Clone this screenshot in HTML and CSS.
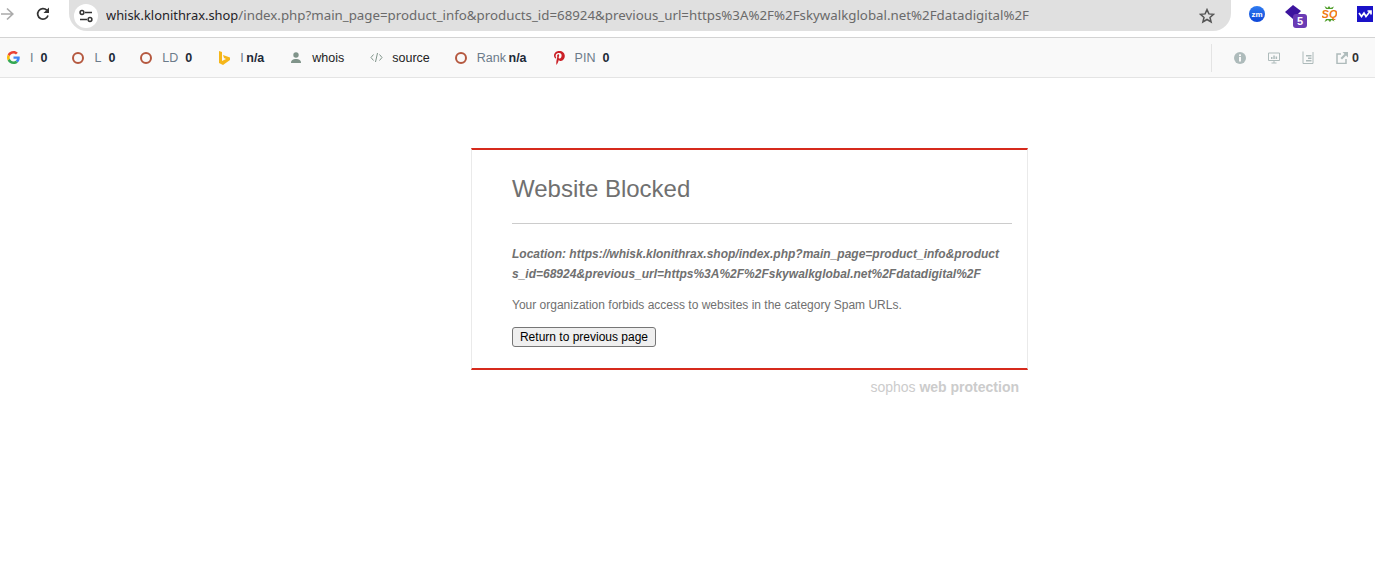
FILE: index.html
```html
<!DOCTYPE html>
<html lang="en">
<head>
  <meta charset="UTF-8">
  <title>Website Blocked</title>
  <link rel="stylesheet" href="styles.css">
</head>
<body>
  <!-- browser toolbar -->
  <div class="toolbar">
    <svg class="nav-forward" width="13" height="14" viewBox="0 0 13 14"><path d="M0 7H11.500M6 1.500L11.800 7 6 12.500" fill="none" stroke="#ababab" stroke-width="1.700"/></svg>
    <svg class="nav-reload" width="14" height="14" viewBox="0 0 14 14"><path d="M12 8.500A5.300 5.300 0 1 1 10.800 3.200" fill="none" stroke="#333" stroke-width="1.700"/><path d="M13 .5V6H7.500z" fill="#333"/></svg>
    <div class="omnibox">
      <span class="site-chip">
        <svg width="14" height="14" viewBox="0 0 14 14"><path d="M6 3.500H13M1 10.500H8" stroke="#333" stroke-width="1.500" fill="none"/><circle cx="3" cy="3.500" r="1.900" fill="none" stroke="#333" stroke-width="1.500"/><circle cx="11" cy="10.500" r="1.900" fill="none" stroke="#333" stroke-width="1.500"/></svg>
      </span>
      <span class="url"><span class="host">whisk.klonithrax.shop</span>/index.php?main_page=product_info&amp;products_id=68924&amp;previous_url=https%3A%2F%2Fskywalkglobal.net%2Fdatadigital%2F</span>
      <svg class="star" width="16" height="16" viewBox="0 0 16 16"><path d="M8 1.600l1.900 4.300 4.600.4-3.500 3.100 1.100 4.600L8 11.500 3.900 14l1.100-4.600L1.500 6.300l4.600-.4z" fill="none" stroke="#555" stroke-width="1.500"/></svg>
    </div>
    <div class="extensions">
      <svg width="16" height="16" viewBox="0 0 16 16"><defs><linearGradient id="zmfill" x1="0" y1="0" x2="0" y2="1"><stop offset="0" stop-color="#2f7cf0"/><stop offset="1" stop-color="#0d46d8"/></linearGradient></defs><circle cx="8" cy="8" r="8" fill="url(#zmfill)"/><text x="8" y="10.500" class="zm-text" text-anchor="middle">zm</text></svg>
      <span class="ext-stack">
        <svg width="16" height="14" viewBox="0 0 16 14"><path d="M8 0L16 6 8 14 0 7z" fill="#3c149e"/></svg>
        <span class="ext-badge">5</span>
      </span>
      <svg class="ext-sq" width="15" height="16" viewBox="0 0 15 16"><path d="M4 3L2.500 0 5.500 2 7 0 8.500 2 12 .5 10.500 3zM4 13L2.500 16 6 14 8 16 9.500 14 12.500 15.500 11 13z" fill="#4f9e2a"/><text x="7.500" y="12" class="sq-text" text-anchor="middle">SQ</text></svg>
      <svg width="16" height="16" viewBox="0 0 16 16"><rect width="16" height="16" fill="#1a12c8"/><path d="M2 7l2.500 3.500L7 7l2 3.500 4-5M10.500 5H14V8.500" fill="none" stroke="#fff" stroke-width="1.700"/></svg>
    </div>
  </div>

  <!-- seo bar -->
  <div class="seobar">
    <div class="seo-left">
      <span class="seo-item item-g">
        <svg width="13" height="13" viewBox="0 0 48 48"><path fill="#ea4335" d="M24 9.500c3.500 0 6.700 1.300 9.100 3.500l6.800-6.800C35.800 2.400 30.300 0 24 0 14.600 0 6.500 5.400 2.600 13.200l7.900 6.100C12.400 13.700 17.700 9.500 24 9.500z"/><path fill="#4285f4" d="M47 24.500c0-1.600-.1-3.100-.4-4.500H24v9h13c-.6 3-2.300 5.500-4.800 7.200l7.700 6C44.400 38 47 31.800 47 24.500z"/><path fill="#fbbc05" d="M10.500 28.700c-.5-1.500-.8-3-.8-4.700s.3-3.200.8-4.700l-7.900-6.100C.9 16.500 0 20.100 0 24s.9 7.500 2.600 10.800z"/><path fill="#34a853" d="M24 48c6.500 0 11.900-2.100 15.900-5.800l-7.700-6c-2.200 1.400-4.900 2.300-8.200 2.300-6.300 0-11.600-4.200-13.500-9.800l-7.900 6.100C6.500 42.600 14.600 48 24 48z"/></svg>
        <span class="lbl">I</span><b>0</b>
      </span>
      <span class="seo-item item-l"><i class="ring"></i><span class="lbl">L</span><b>0</b></span>
      <span class="seo-item item-ld"><i class="ring"></i><span class="lbl">LD</span><b>0</b></span>
      <span class="seo-item item-bing">
        <svg width="11" height="14" viewBox="0 0 11 14"><path d="M0 0l3 1v9l4-2-2-1-1-3 7 2.500V9l-7 5-4-2z" fill="#f5b61a"/></svg>
        <span class="lbl">I</span><b class="na">n/a</b>
      </span>
      <span class="seo-item item-whois">
        <svg width="12" height="11" viewBox="0 0 12 11"><circle cx="6" cy="3" r="2.700" fill="#80948a"/><path d="M1 11c0-3 2-4 5-4s5 1 5 4z" fill="#80948a"/></svg>
        <span class="plain">whois</span>
      </span>
      <span class="seo-item item-source">
        <svg width="13" height="11" viewBox="0 0 13 11"><path d="M3.500 2.500L1 5.500l2.500 3M9.500 2.500L12 5.500l-2.500 3M7.500 1L5.500 10" fill="none" stroke="#80948a" stroke-width="1"/></svg>
        <span class="plain">source</span>
      </span>
      <span class="seo-item item-rank"><i class="ring"></i><span class="lbl">Rank</span><b class="na">n/a</b></span>
      <span class="seo-item item-pin">
        <svg width="12" height="14" viewBox="0 0 12 14"><path d="M6.300 0C2.800 0 1 2.300 1 4.600c0 1.300.6 2.600 1.700 3 .4.100.4-.5.500-.9-.8-1-.8-2.500 0-3.600 1.100-1.500 4-1.600 5-.1.800 1.200.4 4.200-1.300 4.500-.8.100-1.400-.6-1.200-1.300.2-.8.600-1.700.5-2.300-.2-1.100-1.900-.8-2.100.9 0 .6.200 1 .2 1L3.400 10c-.2 1.200-.1 2.800 0 4 .9-1 1.600-2.400 1.900-3.500l.5-1.600c.4.600 1.200 1 2 1 2.500 0 4-2.300 4-4.800C11.800 2 9.500 0 6.300 0z" fill="#cb2027"/></svg>
        <span class="lbl">PIN</span><b>0</b>
      </span>
    </div>
    <div class="seo-right">
      <svg width="12" height="12" viewBox="0 0 12 12"><circle cx="6" cy="6" r="6" fill="#aebbbb"/><rect x="5" y="5" width="2" height="4.500" fill="#f9f9f9"/><rect x="5" y="2.400" width="2" height="1.700" fill="#f9f9f9"/></svg>
      <svg width="12" height="12" viewBox="0 0 12 12"><path d="M.5 1h11v7.500H.5zM6 8.500V11M3.500 11h5" fill="none" stroke="#aebbbb"/><path d="M3 5h1.500v2H3zM5.300 3.500h1.500V7H5.300zM7.600 4.500h1.500V7H7.600z" fill="#aebbbb"/></svg>
      <svg width="12" height="13" viewBox="0 0 12 13"><path d="M1 .5V12.500H11V1" fill="none" stroke="#aebbbb"/><path d="M4 4h5.500v1.500H4zM6 6.500h3.500V8H6zM4 9h5.500v1.500H4z" fill="#aebbbb"/></svg>
      <span class="external">
        <svg width="12" height="12" viewBox="0 0 12 12"><path d="M5 2H1v9.500h9V7" fill="none" stroke="#aebbbb" stroke-width="1.500"/><path d="M6.500 0H12v5.500L10 3.500 6 7.500 4.500 6l4-4z" fill="#aebbbb"/></svg>
        <b>0</b>
      </span>
    </div>
  </div>

  <!-- blocked page -->
  <div class="page">
    <div class="notice">
      <h1>Website Blocked</h1>
      <hr>
      <p class="location">Location: https://whisk.klonithrax.shop/index.php?main_page=product_info&amp;products_id=68924&amp;previous_url=https%3A%2F%2Fskywalkglobal.net%2Fdatadigital%2F</p>
      <p class="reason">Your organization forbids access to websites in the category Spam URLs.</p>
      <button class="back" type="button">Return to previous page</button>
    </div>
    <div class="brand">sophos <b>web protection</b></div>
  </div>
</body>
</html>
```

FILE: styles.css
```css
html, body {
  margin: 0;
  padding: 0;
  background: #fff;
  overflow: hidden;
}
body {
  font-family: "Liberation Sans", Arial, sans-serif;
}

/* toolbar */
.toolbar {
  display: flex;
  align-items: flex-start;
  height: 37px;
  border-bottom: 1px solid #d3d3d3;
  background: #fff;
}
.nav-forward {
  margin: 7px 0 0 1px;
}
.nav-reload {
  margin: 7px 0 0 22px;
}
.omnibox {
  display: flex;
  align-items: center;
  width: 1162px;
  height: 31px;
  margin-left: 19px;
  background: #e0e0e0;
  border-radius: 0 0 18px 18px;
}
.site-chip {
  display: flex;
  align-items: center;
  justify-content: center;
  width: 24px;
  height: 24px;
  margin-left: 5px;
  border-radius: 50%;
  background: #fff;
}
.url {
  flex: 1;
  margin: -2px 0 0 8px;
  font-family: "Noto Sans", "Open Sans", sans-serif;
  font-size: 13.3px;
  color: #6a6a6a;
  white-space: nowrap;
  overflow: hidden;
}
.host {
  font-size: 12.9px;
  color: #1f2328;
}
.star {
  margin-right: 16px;
}
.extensions {
  display: flex;
  align-items: flex-start;
  gap: 20px;
  margin: 6px 0 0 18px;
}
.zm-text {
  font-size: 8px;
  font-weight: bold;
  fill: #fff;
}
.sq-text {
  font-size: 11px;
  font-weight: bold;
  font-style: italic;
  fill: #f07a12;
}
.ext-stack {
  position: relative;
  display: block;
  width: 17px;
  height: 16px;
  margin-top: -1px;
}
.ext-badge {
  position: absolute;
  left: 8px;
  top: 9px;
  width: 14px;
  height: 14px;
  border-radius: 3px;
  background: #6a3bb5;
  color: #fff;
  font-size: 11px;
  font-weight: bold;
  line-height: 14px;
  text-align: center;
}

/* seo bar */
.seobar {
  display: flex;
  justify-content: space-between;
  align-items: center;
  height: 39px;
  border-bottom: 1px solid #e4e4e4;
  background: #f9f9f9;
  font-size: 12.5px;
}
.seo-left {
  display: flex;
  align-items: center;
  margin-left: 7px;
}
.seo-item {
  display: flex;
  align-items: center;
  margin-left: 25px;
  white-space: nowrap;
}
.seo-item.item-g { margin-left: 0; }
.seo-item.item-bing { margin-left: 27px; }
.seo-item.item-whois,
.seo-item.item-source,
.seo-item.item-pin { margin-left: 26px; }

.ring {
  display: block;
  box-sizing: border-box;
  width: 12px;
  height: 12px;
  border: 2px solid #b5583f;
  border-radius: 50%;
}
.lbl {
  margin-left: 10px;
  color: #6c7b8a;
}
.seo-item b {
  margin-left: 7px;
  color: #1e2a38;
}
.seo-item b.na {
  margin-left: 2.5px;
}
.plain {
  margin-left: 10px;
  color: #222;
}
.item-source .plain {
  margin-left: 9px;
}
.seo-right {
  display: flex;
  align-items: center;
  gap: 22px;
  height: 28px;
  padding-left: 22px;
  padding-right: 16px;
  border-left: 1px solid #e4e4e4;
}
.external {
  display: flex;
  align-items: center;
  gap: 4px;
}
.external b {
  color: #333;
}

/* blocked notice */
.page {
  width: 557px;
  margin: 70px 0 0 471px;
}
.notice {
  box-sizing: border-box;
  height: 222px;
  padding: 0 15px 0 40px;
  border: 1px solid #eaeaea;
  border-top: 2px solid #d62a1c;
  border-bottom: 2px solid #d62a1c;
  color: #707070;
}
.notice h1 {
  margin: 25px 0 0;
  font-size: 24px;
  font-weight: normal;
  line-height: 28px;
}
.notice hr {
  height: 1px;
  margin: 20px 0 0;
  border: 0;
  background: #ccc;
}
.location {
  width: 488px;
  margin: 20px 0 0;
  font-size: 12px;
  font-style: italic;
  font-weight: bold;
  line-height: 20px;
  word-break: break-all;
}
.reason {
  margin: 14px 0 0;
  font-size: 12px;
  line-height: 14px;
}
.back {
  display: block;
  height: 20px;
  width: 144px;
  margin: 15px 0 0;
  padding: 0;
  border: 1px solid #767676;
  border-radius: 3px;
  background: #efefef;
  color: #000;
  font-family: "Liberation Sans", Arial, sans-serif;
  font-size: 12px;
}
.brand {
  margin-top: 9px;
  padding-right: 9px;
  text-align: right;
  font-size: 14px;
  color: #ccc;
}
```
